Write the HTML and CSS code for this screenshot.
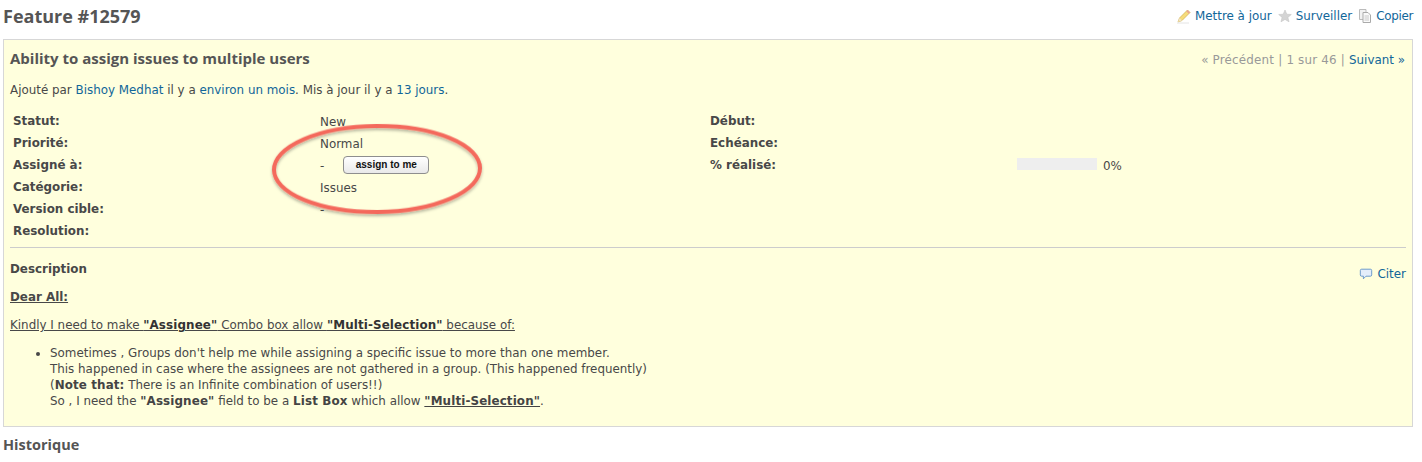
FILE: index.html
```html
<!DOCTYPE html>
<html lang="fr">
<head>
<meta charset="utf-8">
<title>Feature #12579</title>
<link rel="stylesheet" href="styles.css">
</head>
<body>
<div class="page">
  <div class="contextual">
    <a class="act" href="#"><svg class="ico" viewBox="0 0 16 16"><path d="M2 14 L3.5 10 L11.5 2 L14 4.5 L6 12.5 Z" fill="#f7dc7a" stroke="#cfae4c" stroke-width=".7"/><path d="M11.5 2 L14 4.5 L12.8 5.7 L10.3 3.2 Z" fill="#e8a397"/><path d="M2 14 L3.5 10 L6 12.5 Z" fill="#f1e3c4"/><path d="M1 15 H13" stroke="#e4e4e4" stroke-width="1"/></svg>Mettre à jour</a>
    <a class="act" href="#"><svg class="ico" viewBox="0 0 16 16"><path d="M8 2 L9.8 6.2 L14.3 6.5 L10.9 9.4 L12 13.8 L8 11.4 L4 13.8 L5.1 9.4 L1.7 6.5 L6.2 6.2 Z" fill="#d4d4d4" stroke="#c6c6c6" stroke-width=".6"/></svg>Surveiller</a>
    <a class="act act-last" href="#"><svg class="ico" viewBox="0 0 16 16"><path d="M2.5 1.5 H9 V11.5 H2.5 Z" fill="#f2f2f2" stroke="#bbb"/><path d="M6 4.5 H11 L13.5 7 V14.5 H6 Z" fill="#fafafa" stroke="#aaa"/><path d="M7.5 8 H12 M7.5 10 H12 M7.5 12 H12" stroke="#c8c8c8"/></svg>Copier</a>
  </div>
  <h2 class="title">Feature #12579</h2>
  <div class="issue">
    <div class="nav"><span class="nav-off">« Précédent | 1 sur 46 | </span><a href="#">Suivant »</a></div>
    <h3 class="subject">Ability to assign issues to multiple users</h3>
    <p class="author">Ajouté par <a href="#">Bishoy Medhat</a> il y a <a href="#">environ un mois</a>. Mis à jour il y a <a href="#">13 jours</a>.</p>
    <div class="attrs">
      <div class="row"><div class="lbl">Statut:</div><div class="val">New</div><div class="lbl">Début:</div><div class="val"></div></div>
      <div class="row"><div class="lbl">Priorité:</div><div class="val">Normal</div><div class="lbl">Echéance:</div><div class="val"></div></div>
      <div class="row"><div class="lbl">Assigné à:</div><div class="val">-<button class="assign" type="button">assign to me</button></div><div class="lbl">% réalisé:</div><div class="val progress"><span class="bar"></span><span>0%</span></div></div>
      <div class="row"><div class="lbl">Catégorie:</div><div class="val">Issues</div><div class="lbl"></div><div class="val"></div></div>
      <div class="row"><div class="lbl">Version cible:</div><div class="val">-</div><div class="lbl"></div><div class="val"></div></div>
      <div class="row"><div class="lbl">Resolution:</div><div class="val"></div><div class="lbl"></div><div class="val"></div></div>
    </div>
    <hr class="sep">
    <a class="quote" href="#"><svg class="ico-q" viewBox="0 0 16 16"><path d="M3 2.5 H13 Q14.5 2.5 14.5 4 V9 Q14.5 10.5 13 10.5 H8 L5 13.5 V10.5 H3 Q1.5 10.5 1.5 9 V4 Q1.5 2.5 3 2.5 Z" fill="#e4eefa" stroke="#5b8fc7"/></svg>Citer</a>
    <div class="dtitle">Description</div>
    <p class="dear">Dear All:</p>
    <p class="kindly">Kindly I need to make <b>"Assignee"</b> Combo box allow <b>"Multi-Selection"</b> because of:</p>
    <ul class="list">
      <li>Sometimes , Groups don't help me while assigning a specific issue to more than one member.<br>
      This happened in case where the assignees are not gathered in a group. (This happened frequently)<br>
      (<b>Note that:</b> There is an Infinite combination of users!!)<br>
      So , I need the <b>"Assignee"</b> field to be a <b>List Box</b> which allow <b class="u">"Multi-Selection"</b>.</li>
    </ul>
  </div>
  <h3 class="hist">Historique</h3>
</div>
<svg class="ring" width="230" height="110" viewBox="0 0 230 110">
  <defs><filter id="sh" x="-10%" y="-10%" width="120%" height="130%"><feDropShadow dx="0" dy="2" stdDeviation="1.5" flood-color="#000" flood-opacity=".3"/></filter></defs>
  <ellipse cx="115" cy="55" rx="103" ry="43" fill="none" stroke="#f4695c" stroke-width="4" filter="url(#sh)" transform="rotate(-0.5 115 55)"/>
</svg>
</body>
</html>
```
FILE: styles.css
```css
* { box-sizing: border-box; }
html, body { margin: 0; padding: 0; }
body {
  width: 1422px;
  height: 462px;
  overflow: hidden;
  background: #fff;
  font-family: "DejaVu Sans", Verdana, sans-serif;
  font-size: 11.9px;
  color: #484848;
  position: relative;
}
a { color: #169; text-decoration: none; }
b { letter-spacing: .12px; }
.page { padding: 0 9px 0 3px; }
.contextual {
  float: right;
  display: flex;
  gap: 5px;
  padding-top: 8px;
  height: 24px;
  line-height: 15px;
}
.act { display: flex; align-items: center; }
.act-last { letter-spacing: -.3px; }
.ico { width: 16px; height: 16px; margin-right: 3px; }
.title {
  margin: 0;
  height: 39px;
  padding-top: 3px;
  font: 700 18px/26px "Open Sans", sans-serif;
  color: #555;
}
.issue {
  width: 1410px;
  height: 388px;
  border: 1px solid #d7d7d7;
  background: #ffd;
  padding: 0 6px;
}
.nav { float: right; padding: 12px 1px 0 0; line-height: 16px; color: #999; }
.nav-off { letter-spacing: .2px; }
.subject {
  margin: 0;
  padding-top: 8px;
  height: 37px;
  font: 700 15px/20px "Open Sans", sans-serif;
  color: #555;
}
.author { margin: 0; height: 33px; padding-top: 5px; line-height: 16px; }
.attrs { display: flex; flex-direction: column; margin-left: 3px; }
.row { display: grid; grid-template-columns: 307px 390px 307px 1fr; height: 22px; line-height: 16px; padding-top: 4px; }
.lbl { font-weight: 700; margin-top: -1px; }
.val { display: flex; align-items: flex-start; }
.assign {
  margin: -2px 0 0 19px;
  width: 86px;
  height: 18px;
  padding: 0;
  border: 1px solid #8e8e8e;
  border-radius: 4px;
  background: linear-gradient(#fff, #e9e9e9);
  font: 700 10px/16px "Liberation Sans", sans-serif;
  color: #111;
}
.progress { align-items: center; height: 16px; gap: 6px; }
.bar { width: 80px; height: 12px; margin-top: -4px; background: #eee; }
.sep { border: 0; border-top: 1px solid #ccc; margin: 5px 0 0; clear: both; }
.quote { float: right; display: flex; align-items: center; margin: 18px 0 0; line-height: 16px; }
.ico-q { width: 14px; height: 14px; margin-right: 5px; }
.dtitle { font-weight: 700; line-height: 16px; padding-top: 13px; height: 29px; }
.dear { margin: 12px 0 0; font-weight: 700; text-decoration: underline; line-height: 16px; }
.kindly { margin: 12px 0 0; text-decoration: underline; line-height: 16px; }
.kindly b { color: #333; }
.list { margin: 12px 0 0; padding: 0 0 0 40px; line-height: 16px; }
.list b { color: #444; }
.u { text-decoration: underline; }
.hist {
  margin: 0;
  padding-top: 8px;
  font: 700 14.5px/20px "Open Sans", sans-serif;
  color: #555;
}
.ring { position: absolute; left: 262px; top: 114px; pointer-events: none; }
```
